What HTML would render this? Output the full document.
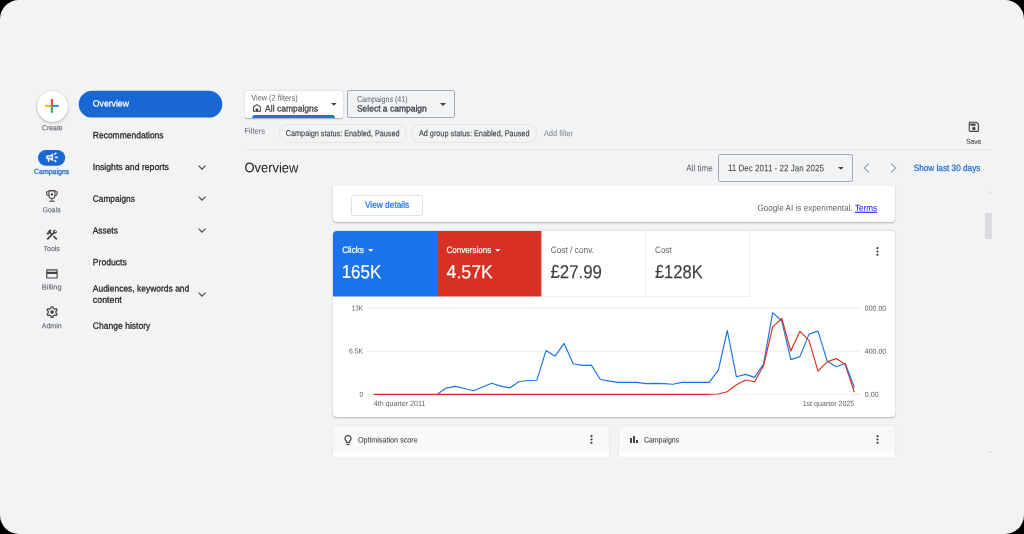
<!DOCTYPE html>
<html>
<head>
<meta charset="utf-8">
<title>Google Ads Overview</title>
<style>
html,body{margin:0;padding:0;}
html{background:#000;}
body{width:1024px;height:534px;overflow:hidden;position:relative;background:#f1f3f4;border-radius:19px;font-family:"Liberation Sans",sans-serif;color:#202124;}
.a{position:absolute;}
.t{position:absolute;white-space:nowrap;}
.ic{position:absolute;overflow:visible;}
.card{position:absolute;background:#fff;box-shadow:0 0.6px 2px rgba(60,64,67,.24),0 0.4px 1px rgba(60,64,67,.13);}
</style>
</head>
<body>
<svg class="ic" style="left:0;top:0" width="1024" height="534"><rect x="78.7" y="90.7" width="143.6" height="26.9" rx="13.45" fill="#1967d2"/><rect x="38" y="149.9" width="27.2" height="15.9" rx="7.95" fill="#1967d2"/></svg>
<!-- left rail -->
<div class="a" style="left:37px;top:90.5px;width:31px;height:31px;border-radius:50%;background:#fff;box-shadow:0 1px 2.5px rgba(60,64,67,.35),0 0 1px rgba(60,64,67,.25);"></div>
<svg class="ic" style="left:45.2px;top:99.2px" width="13.8" height="13.8" viewBox="0 0 14 14"><rect x="5.95" y="0" width="2.1" height="7" fill="#ea4335"/><rect x="5.95" y="7" width="2.1" height="7" fill="#34a853"/><rect x="0" y="5.95" width="7" height="2.1" fill="#fbbc04"/><rect x="7" y="5.95" width="7" height="2.1" fill="#4285f4"/><path d="M5.95 5.95h2.1L5.95 8.05z" fill="#ea4335"/></svg>
<svg class="ic" style="left:44.7px;top:149.85px" width="14.6" height="14.6" viewBox="0 0 24 24"><g fill="#fff" stroke="#fff" stroke-width="0.55" stroke-linejoin="round"><path transform="translate(-1.3 0)" d="M18 11v2h4v-2h-4z M16 17.61c.96.71 2.21 1.65 3.2 2.39.4-.53.8-1.07 1.2-1.6-.99-.74-2.24-1.68-3.2-2.4-.4.54-.8 1.08-1.2 1.61z M20.4 5.6c-.4-.53-.8-1.07-1.2-1.6-.99.74-2.24 1.68-3.2 2.4.4.53.8 1.07 1.2 1.6.96-.72 2.21-1.65 3.2-2.4z"/><path d="M4 9c-1.1 0-2 .9-2 2v2c0 1.1.9 2 2 2h1v4h2v-4h1l5 3V6L8 9H4z M9.03 10.71L11 9.53v4.94l-1.97-1.18-.48-.29H4v-2h4.55l.48-.29z"/></g></svg>
<svg class="ic" style="left:44px;top:188px" width="16" height="16" viewBox="44 188 16 16"><g fill="none" stroke="#444746" stroke-width="1.05" stroke-linejoin="round"><path d="M48.9 190.7H54.9V195.1a3 3.4 0 0 1-6 0Z"/><path d="M48.9 191.8H46.55V193Q46.55 195.5 49.2 196"/><path d="M54.9 191.8H57.25V193Q57.25 195.5 54.6 196"/><path d="M51.9 198.5V201"/><path d="M49.1 201.3H54.7" stroke-width="1.1"/></g><path d="M48.6 190.65H55.2" stroke="#444746" stroke-width="1.2"/><circle cx="51.9" cy="194.4" r="1.2" fill="#444746"/></svg>
<svg class="ic" style="left:44.9px;top:228.0px" width="13.6" height="13.6" viewBox="0 0 24 24"><path fill="#444746" d="M13.783 15.172l2.121-2.121 5.996 5.996-2.121 2.121zM17.5 10c1.93 0 3.5-1.57 3.5-3.5 0-.58-.16-1.12-.41-1.6l-2.7 2.7-1.49-1.49 2.7-2.7c-.48-.25-1.02-.41-1.6-.41C15.57 3 14 4.57 14 6.5c0 .41.08.8.21 1.16l-1.85 1.85-1.78-1.78.71-.71-1.41-1.41L12 3.49c-1.17-1.17-3.07-1.17-4.24 0L4.22 7.03l1.41 1.41H2.81l-.71.71 3.54 3.54.71-.71V9.15l1.41 1.41.71-.71 1.78 1.78-7.41 7.41 2.12 2.12L16.34 9.79c.36.13.75.21 1.16.21z"/></svg>
<svg class="ic" style="left:44.85px;top:266.7px" width="13.9" height="13.9" viewBox="0 0 24 24"><path fill="#444746" d="M20 4H4c-1.11 0-1.99.89-1.99 2L2 18c0 1.11.89 2 2 2h16c1.11 0 2-.89 2-2V6c0-1.11-.89-2-2-2zm0 14H4v-6h16v6zm0-10H4V6h16v2z"/></svg>
<svg class="ic" style="left:44.7px;top:304.9px" width="14.2" height="14.2" viewBox="0 0 24 24"><path fill="#444746" d="M19.43 12.98c.04-.32.07-.64.07-.98 0-.34-.03-.66-.07-.98l2.11-1.65c.19-.15.24-.42.12-.64l-2-3.46c-.09-.16-.26-.25-.44-.25-.06 0-.12.01-.17.03l-2.49 1c-.52-.4-1.08-.73-1.69-.98l-.38-2.650C14.46 2.18 14.25 2 14 2h-4c-.25 0-.46.18-.49.42l-.38 2.650c-.61.25-1.17.59-1.69.98l-2.49-1c-.06-.02-.12-.03-.18-.03-.17 0-.34.09-.43.25l-2 3.46c-.13.22-.07.49.12.64l2.11 1.650c-.04.32-.07.65-.07.98 0 .33.03.66.07.98l-2.11 1.650c-.19.15-.24.42-.12.64l2 3.46c.09.16.26.25.44.25.06 0 .12-.01.17-.03l2.49-1c.52.4 1.08.73 1.69.98l.38 2.650c.03.24.24.42.49.42h4c.25 0 .46-.18.49-.42l.38-2.650c.61-.25 1.17-.59 1.69-.98l2.49 1c.06.02.12.03.18.03.17 0 .34-.09.43-.25l2-3.46c.12-.22.07-.49-.12-.64l-2.11-1.650zm-1.980-1.710c.04.31.05.52.05.73 0 .21-.02.43-.05.73l-.14 1.130.89.700 1.080.840-.700 1.210-1.270-.510-1.040-.420-.900.680c-.43.32-.84.56-1.250.73l-1.060.430-.160 1.130-.200 1.350h-1.400l-.190-1.350-.160-1.130-1.060-.430c-.43-.18-.83-.41-1.230-.71l-.910-.700-1.060.430-1.270.510-.700-1.210 1.080-.840.890-.700-.140-1.130c-.03-.31-.05-.54-.05-.74s.02-.43.05-.73l.14-1.130-.89-.700-1.080-.840.700-1.210 1.270.51 1.040.42.900-.68c.43-.32.84-.56 1.250-.73l1.060-.43.160-1.130.200-1.350h1.390l.190 1.350.160 1.130 1.060.43c.43.18.83.41 1.230.71l.910.700 1.060-.43 1.270-.51.700 1.210-1.070.85-.89.700.14 1.130z"/><circle cx="12" cy="12" r="3.1" fill="#444746"/></svg>
<!-- second nav -->
<svg class="ic" style="left:198px;top:164.6px" width="8" height="5.2" viewBox="0 0 8 5.2"><path d="M0.6 0.7L4 4.2 7.4 0.7" fill="none" stroke="#3c4043" stroke-width="1.05"/></svg>
<svg class="ic" style="left:198px;top:196.20000000000002px" width="8" height="5.2" viewBox="0 0 8 5.2"><path d="M0.6 0.7L4 4.2 7.4 0.7" fill="none" stroke="#3c4043" stroke-width="1.05"/></svg>
<svg class="ic" style="left:198px;top:227.8px" width="8" height="5.2" viewBox="0 0 8 5.2"><path d="M0.6 0.7L4 4.2 7.4 0.7" fill="none" stroke="#3c4043" stroke-width="1.05"/></svg>
<svg class="ic" style="left:198px;top:291.59999999999997px" width="8" height="5.2" viewBox="0 0 8 5.2"><path d="M0.6 0.7L4 4.2 7.4 0.7" fill="none" stroke="#3c4043" stroke-width="1.05"/></svg>
<!-- selectors -->
<div class="a" style="left:244.5px;top:90.5px;width:98.5px;height:27.5px;background:#fff;border-radius:2.5px;box-shadow:0 0.5px 1.5px rgba(60,64,67,.4);overflow:hidden;"><div class="a" style="left:7.5px;top:24.6px;width:83px;height:4px;border-radius:3px 3px 0 0;background:#1a73e8;"></div></div>
<svg class="ic" style="left:253.0px;top:103.9px" width="7.9" height="7.9" viewBox="0 0 8 8"><path d="M0.55 7.45V3L4 0.65 7.45 3V7.45z" fill="none" stroke="#444746" stroke-width="1.05" stroke-linejoin="round"/><rect x="2.75" y="4.55" width="2.5" height="2.95" fill="#444746"/></svg>
<svg class="ic" style="left:331.3px;top:102.8px" width="5.6" height="2.8" viewBox="0 0 10 5" preserveAspectRatio="none"><path d="M0 0h10L5 5z" fill="#3c4043"/></svg>
<div class="a" style="left:347.2px;top:90px;width:107.5px;height:27.9px;box-sizing:border-box;border:1px solid #a3a8ae;border-radius:2.5px;"></div>
<svg class="ic" style="left:440px;top:102.8px" width="6" height="2.9" viewBox="0 0 10 5" preserveAspectRatio="none"><path d="M0 0h10L5 5z" fill="#3c4043"/></svg>
<!-- filters -->
<div class="a" style="left:278.6px;top:124.3px;width:128px;height:18.4px;box-sizing:border-box;border:1px solid #e2e4e7;border-radius:9.2px;"></div>
<div class="a" style="left:411.2px;top:124.3px;width:125.5px;height:18.4px;box-sizing:border-box;border:1px solid #e2e4e7;border-radius:9.2px;"></div>
<svg class="ic" style="left:967.1px;top:120.4px" width="13.7" height="13.7" viewBox="0 0 24 24"><path fill="#444746" d="M17 3H5c-1.11 0-2 .9-2 2v14c0 1.1.89 2 2 2h14c1.1 0 2-.9 2-2V7l-4-4zm2 16H5V5h11.170L19 7.830V19zm-7-7c-1.660 0-3 1.340-3 3s1.340 3 3 3 3-1.340 3-3-1.340-3-3-3zM6 6h9v4H6z"/></svg>
<div class="a" style="left:244.5px;top:149px;width:747.5px;height:1px;background:#e3e5e8;"></div>
<!-- title row -->
<div class="a" style="left:718.1px;top:154.2px;width:134.6px;height:27.4px;box-sizing:border-box;border:1px solid #a3a8ae;border-radius:2.5px;"></div>
<svg class="ic" style="left:837.5px;top:166.9px" width="5.6" height="2.8" viewBox="0 0 10 5" preserveAspectRatio="none"><path d="M0 0h10L5 5z" fill="#3c4043"/></svg>
<svg class="ic" style="left:862.5px;top:163px" width="7" height="10" viewBox="0 0 7 10"><path d="M5.9 0.6L1.1 5l4.8 4.4" fill="none" stroke="#9aa0a6" stroke-width="1.1"/></svg>
<svg class="ic" style="left:889.7px;top:163px" width="7" height="10" viewBox="0 0 7 10"><path d="M1.1 0.6L5.9 5l-4.8 4.4" fill="none" stroke="#9aa0a6" stroke-width="1.1"/></svg>
<div class="a" style="left:985px;top:213px;width:7px;height:26px;background:#dadce0;"></div>
<svg class="ic" style="left:987.6px;top:191.4px" width="4.4" height="2.8" viewBox="0 0 10 5" preserveAspectRatio="none"><path d="M0 5L5 0l5 5z" fill="#dadce0"/></svg>
<svg class="ic" style="left:987.6px;top:451px" width="4.4" height="2.8" viewBox="0 0 10 5" preserveAspectRatio="none"><path d="M0 0h10L5 5z" fill="#dadce0"/></svg>
<!-- card 1 -->
<div class="card" style="left:333px;top:186px;width:562.3px;height:35.7px;border-radius:0 0 4px 4px;box-shadow:0 0.6px 2px rgba(60,64,67,.24),0 0.4px 1px rgba(60,64,67,.13);clip-path:inset(0 -3px -4px -3px);"></div>
<div class="a" style="left:351.2px;top:195.2px;width:71.4px;height:20.6px;box-sizing:border-box;border:1px solid #dfe1e5;border-radius:2.5px;"></div>
<!-- card 2 -->
<div class="card" style="left:333px;top:230.9px;width:562.3px;height:185.8px;border-radius:4px;overflow:hidden;">
  <svg class="ic" style="left:0;top:0" width="320" height="70"><rect x="-1" y="-1" width="105.05" height="66.5" fill="#1a73e8"/><rect x="104.05" y="-1" width="104.35" height="66.5" fill="#d93025"/></svg>
  <div class="a" style="left:208.4px;top:0;width:104.2px;height:66px;box-sizing:border-box;border-right:1px solid #eceef0;border-bottom:1px solid #eceef0;"></div>
  <div class="a" style="left:312.4px;top:0;width:104.2px;height:66px;box-sizing:border-box;border-right:1px solid #eceef0;border-bottom:1px solid #eceef0;"></div>
</div>
<svg class="ic" style="left:368.3px;top:248.9px" width="5.5" height="2.8" viewBox="0 0 10 5" preserveAspectRatio="none"><path d="M0 0h10L5 5z" fill="#fff"/></svg>
<svg class="ic" style="left:495.4px;top:248.9px" width="5.5" height="2.8" viewBox="0 0 10 5" preserveAspectRatio="none"><path d="M0 0h10L5 5z" fill="#fff"/></svg>
<svg class="ic" style="left:876px;top:247.2px" width="3" height="9" viewBox="0 0 3 9"><circle cx="1.5" cy="1.2" r="1.1" fill="#3c4043"/><circle cx="1.5" cy="4.5" r="1.1" fill="#3c4043"/><circle cx="1.5" cy="7.8" r="1.1" fill="#3c4043"/></svg>
<svg class="ic" style="left:0;top:0" width="1024" height="534" viewBox="0 0 1024 534">
  <g stroke="#e5e7ea" stroke-width="0.85">
    <line x1="367" y1="308" x2="860.5" y2="308"/>
    <line x1="367" y1="351.1" x2="860.5" y2="351.1"/>
    <line x1="367" y1="394.3" x2="860.5" y2="394.3"/>
    <line x1="373.7" y1="394.3" x2="373.7" y2="397.4"/>
    <line x1="854.3" y1="394.3" x2="854.3" y2="397.4"/>
  </g>
  <polyline fill="none" stroke="#1a73e8" stroke-width="1.15" stroke-linejoin="round" points="437.2,394.2 446.2,388.1 455.3,386.4 464.4,388.5 473.4,390.7 482.5,387.0 491.6,383.3 500.7,386.1 509.7,387.9 518.8,381.8 527.9,380.5 536.9,380.2 546.0,350.6 555.1,356.2 564.1,343.4 573.2,363.8 582.3,365.4 591.3,365.1 600.4,379.5 609.5,381.1 618.5,382.4 627.6,382.4 636.7,382.4 645.7,383.6 654.8,383.4 663.9,383.6 672.9,384.3 682.0,382.4 691.1,382.4 700.1,382.4 709.2,382.4 718.3,370.3 727.3,330.5 736.4,376.8 745.5,374.4 754.6,377.4 763.6,363.7 772.7,312.7 781.8,321.0 790.8,359.6 799.9,356.6 809.0,334.1 818.0,331.1 827.1,360.9 836.2,366.7 845.2,363.3 854.3,387.7"/>
  <polyline fill="none" stroke="#d93025" stroke-width="1.15" stroke-linejoin="round" points="373.7,394.3 382.8,394.3 391.8,394.3 400.9,394.3 410.0,394.3 419.0,394.3 428.1,394.3 437.2,394.3 446.2,394.3 455.3,394.3 464.4,394.3 473.4,394.3 482.5,394.3 491.6,394.3 500.7,394.3 509.7,394.3 518.8,394.3 527.9,394.3 536.9,394.3 546.0,394.3 555.1,394.3 564.1,394.3 573.2,394.3 582.3,394.3 591.3,394.3 600.4,394.3 609.5,394.3 618.5,394.3 627.6,394.3 636.7,394.3 645.7,394.3 654.8,394.3 663.9,394.3 672.9,394.3 682.0,394.3 691.1,394.3 700.1,394.3 709.2,394.3 718.3,394.0 727.3,391.8 736.4,384.7 745.5,380.0 754.6,381.8 763.6,365.6 772.7,326.8 781.8,318.5 790.8,351.0 799.9,331.3 809.0,340.3 818.0,371.2 827.1,361.8 836.2,358.6 845.2,364.6 854.3,392.2"/>
</svg>
<!-- cards 3/4 -->
<div class="card" style="left:333px;top:426.2px;width:276.2px;height:30.6px;box-shadow:0 0 1.5px rgba(60,64,67,.18);border-radius:4px 4px 0 0;background:linear-gradient(#f8f9fa 0,#f8f9fa 26.5px,#fff 27.5px);clip-path:inset(-3px -3px 0 -3px);"></div>
<div class="card" style="left:619.1px;top:426.2px;width:276.2px;height:30.6px;box-shadow:0 0 1.5px rgba(60,64,67,.18);border-radius:4px 4px 0 0;background:linear-gradient(#f8f9fa 0,#f8f9fa 26.5px,#fff 27.5px);clip-path:inset(-3px -3px 0 -3px);"></div>
<svg class="ic" style="left:341.75px;top:433.75px" width="12" height="12" viewBox="0 0 24 24"><path fill="#444746" stroke="#444746" stroke-width="0.5" d="M9 21c0 .55.45 1 1 1h4c.55 0 1-.45 1-1v-1H9v1zm3-19C8.140 2 5 5.140 5 9c0 2.380 1.190 4.470 3 5.740V17c0 .55.45 1 1 1h6c.55 0 1-.45 1-1v-2.260c1.810-1.270 3-3.360 3-5.740 0-3.860-3.140-7-7-7zm2.850 11.100l-.85.600V16h-4v-2.300l-.85-.600C7.800 12.160 7 10.630 7 9c0-2.760 2.240-5 5-5s5 2.240 5 5c0 1.630-.8 3.160-2.150 4.100z"/></svg>
<div class="a" style="left:629.7px;top:438px;width:1.9px;height:5.1px;background:#444746;"></div>
<div class="a" style="left:632.7px;top:436px;width:2px;height:7.1px;background:#444746;"></div>
<div class="a" style="left:635.9px;top:439.9px;width:2px;height:3.2px;background:#444746;"></div>
<svg class="ic" style="left:590.3px;top:435px" width="3" height="9" viewBox="0 0 3 9"><circle cx="1.5" cy="1.2" r="1.1" fill="#3c4043"/><circle cx="1.5" cy="4.5" r="1.1" fill="#3c4043"/><circle cx="1.5" cy="7.8" r="1.1" fill="#3c4043"/></svg>
<svg class="ic" style="left:876px;top:435px" width="3" height="9" viewBox="0 0 3 9"><circle cx="1.5" cy="1.2" r="1.1" fill="#3c4043"/><circle cx="1.5" cy="4.5" r="1.1" fill="#3c4043"/><circle cx="1.5" cy="7.8" r="1.1" fill="#3c4043"/></svg>
<!-- all text -->
<svg class="ic" style="left:0;top:0;font-family:'Liberation Sans',sans-serif;will-change:transform;" width="1024" height="534" viewBox="0 0 1024 534">
<text transform="matrix(0.954 0.001 0 1.000 41.90 130.27)" font-size="7.27" fill="#5f6368" stroke="#5f6368" stroke-width="0.1" stroke-linejoin="round">Create</text>
<text transform="matrix(0.966 0.001 0 1.000 33.95 173.87)" font-size="7.27" fill="#1967d2" stroke="#1967d2" stroke-width="0.25" stroke-linejoin="round">Campaigns</text>
<text transform="matrix(0.938 0.001 0 1.000 42.80 212.32)" font-size="7.27" fill="#5f6368" stroke="#5f6368" stroke-width="0.1" stroke-linejoin="round">Goals</text>
<text transform="matrix(0.961 0.001 0 1.000 43.55 251.02)" font-size="7.27" fill="#5f6368" stroke="#5f6368" stroke-width="0.1" stroke-linejoin="round">Tools</text>
<text transform="matrix(1.021 0.001 0 1.000 41.80 289.52)" font-size="7.27" fill="#5f6368" stroke="#5f6368" stroke-width="0.1" stroke-linejoin="round">Billing</text>
<text transform="matrix(0.976 0.001 0 1.000 41.65 328.22)" font-size="7.27" fill="#5f6368" stroke="#5f6368" stroke-width="0.1" stroke-linejoin="round">Admin</text>
<text transform="matrix(0.949 0.001 0 1.000 92.80 106.47)" font-size="9.16" fill="#fff" stroke="#fff" stroke-width="0.26" stroke-linejoin="round">Overview</text>
<text transform="matrix(0.927 0.001 0 1.000 92.80 138.22)" font-size="9.16" fill="#202124" stroke="#202124" stroke-width="0.26" stroke-linejoin="round">Recommendations</text>
<text transform="matrix(0.947 0.001 0 1.000 92.80 170.02)" font-size="9.16" fill="#202124" stroke="#202124" stroke-width="0.26" stroke-linejoin="round">Insights and reports</text>
<text transform="matrix(0.907 0.001 0 1.000 92.80 201.77)" font-size="9.16" fill="#202124" stroke="#202124" stroke-width="0.26" stroke-linejoin="round">Campaigns</text>
<text transform="matrix(0.910 0.001 0 1.000 92.80 233.52)" font-size="9.16" fill="#202124" stroke="#202124" stroke-width="0.26" stroke-linejoin="round">Assets</text>
<text transform="matrix(0.941 0.001 0 1.000 92.80 265.22)" font-size="9.16" fill="#202124" stroke="#202124" stroke-width="0.26" stroke-linejoin="round">Products</text>
<text transform="matrix(0.926 0.001 0 1.000 92.80 291.47)" font-size="9.16" fill="#202124" stroke="#202124" stroke-width="0.26" stroke-linejoin="round">Audiences, keywords and</text>
<text transform="matrix(0.965 0.001 0 1.000 92.80 302.67)" font-size="9.16" fill="#202124" stroke="#202124" stroke-width="0.26" stroke-linejoin="round">content</text>
<text transform="matrix(0.934 0.001 0 1.000 92.80 328.67)" font-size="9.16" fill="#202124" stroke="#202124" stroke-width="0.26" stroke-linejoin="round">Change history</text>
<text transform="matrix(0.895 0.001 0 1.000 251.30 100.59)" font-size="8.21" fill="#5f6368">View (2 filters)</text>
<text transform="matrix(0.945 0.001 0 1.000 265.10 111.42)" font-size="9.01" fill="#3c4043" stroke="#3c4043" stroke-width="0.28" stroke-linejoin="round">All campaigns</text>
<text transform="matrix(0.864 0.001 0 1.000 356.90 101.87)" font-size="8.28" fill="#5f6368">Campaigns (41)</text>
<text transform="matrix(0.943 0.001 0 1.000 356.90 111.42)" font-size="9.01" fill="#3c4043" stroke="#3c4043" stroke-width="0.3" stroke-linejoin="round">Select a campaign</text>
<text transform="matrix(0.921 0.001 0 1.000 244.50 133.62)" font-size="8.14" fill="#5f6368">Filters</text>
<text transform="matrix(0.852 0.001 0 1.000 285.80 136.10)" font-size="8.52" fill="#3c4043" stroke="#3c4043" stroke-width="0.12" stroke-linejoin="round">Campaign status: Enabled, Paused</text>
<text transform="matrix(0.856 0.001 0 1.000 418.90 136.10)" font-size="8.52" fill="#3c4043" stroke="#3c4043" stroke-width="0.12" stroke-linejoin="round">Ad group status: Enabled, Paused</text>
<text transform="matrix(0.872 0.001 0 1.000 543.90 136.10)" font-size="8.52" fill="#80868b">Add filter</text>
<text transform="matrix(0.930 0.001 0 1.000 966.20 143.87)" font-size="7.12" fill="#3c4043" stroke="#3c4043" stroke-width="0.1" stroke-linejoin="round">Save</text>
<text transform="matrix(0.933 0.001 0 1.000 244.50 172.34)" font-size="13.88" fill="#202124">Overview</text>
<text transform="matrix(0.872 0.001 0 1.000 686.30 171.12)" font-size="9.30" fill="#5f6368">All time</text>
<text transform="matrix(0.868 0.001 0 1.000 727.90 171.12)" font-size="9.30" fill="#3c4043">11 Dec 2011 - 22 Jan 2025</text>
<text transform="matrix(0.899 0.001 0 1.000 913.70 171.02)" font-size="9.16" fill="#1967d2" stroke="#1967d2" stroke-width="0.22" stroke-linejoin="round">Show last 30 days</text>
<text transform="matrix(0.910 0.001 0 1.000 364.90 207.77)" font-size="9.16" fill="#1a73e8" stroke="#1a73e8" stroke-width="0.25" stroke-linejoin="round">View details</text>
<text transform="matrix(0.937 0.001 0 1.000 757.40 210.67)" font-size="8.72" fill="#5f6368">Google AI is experimental. <tspan fill="#0a0aee" text-decoration="underline">Terms</tspan></text>
<text transform="matrix(0.875 0.001 0 1.000 342.20 253.02)" font-size="9.30" fill="#fff" stroke="#fff" stroke-width="0.2" stroke-linejoin="round">Clicks</text>
<text transform="matrix(0.904 0.001 0 1.000 341.70 278.12)" font-size="18.75" fill="#fff" stroke="#fff" stroke-width="0.2" stroke-linejoin="round">165K</text>
<text transform="matrix(0.865 0.001 0 1.000 446.50 253.02)" font-size="9.30" fill="#fff" stroke="#fff" stroke-width="0.2" stroke-linejoin="round">Conversions</text>
<text transform="matrix(0.943 0.001 0 1.000 446.60 278.12)" font-size="18.75" fill="#fff" stroke="#fff" stroke-width="0.2" stroke-linejoin="round">4.57K</text>
<text transform="matrix(0.896 0.001 0 1.000 550.70 252.92)" font-size="9.30" fill="#5f6368">Cost / conv.</text>
<text transform="matrix(0.898 0.001 0 1.000 550.50 278.12)" font-size="18.75" fill="#3c4043" stroke="#3c4043" stroke-width="0.15" stroke-linejoin="round">£27.99</text>
<text transform="matrix(0.863 0.001 0 1.000 655.10 252.92)" font-size="9.30" fill="#5f6368">Cost</text>
<text transform="matrix(0.885 0.001 0 1.000 654.90 278.12)" font-size="18.75" fill="#3c4043" stroke="#3c4043" stroke-width="0.15" stroke-linejoin="round">£128K</text>
<text transform="matrix(0.882 0.001 0 1.000 363.10 310.52)" font-size="7.27" fill="#5f6368" text-anchor="end">13K</text>
<text transform="matrix(0.943 0.001 0 1.000 363.10 353.62)" font-size="7.27" fill="#5f6368" text-anchor="end">6.5K</text>
<text transform="matrix(0.866 0.001 0 1.000 363.10 396.82)" font-size="7.27" fill="#5f6368" text-anchor="end">0</text>
<text transform="matrix(0.967 0.001 0 1.000 864.80 310.62)" font-size="7.27" fill="#5f6368">800.00</text>
<text transform="matrix(0.967 0.001 0 1.000 864.80 353.62)" font-size="7.27" fill="#5f6368">400.00</text>
<text transform="matrix(0.976 0.001 0 1.000 864.80 396.72)" font-size="7.27" fill="#5f6368">0.00</text>
<text transform="matrix(0.942 0.001 0 1.000 373.70 405.97)" font-size="7.56" fill="#5f6368">4th quarter 2011</text>
<text transform="matrix(0.939 0.001 0 1.000 854.30 405.97)" font-size="7.56" fill="#5f6368" text-anchor="end">1st quarter 2025</text>
<text transform="matrix(0.905 0.001 0 1.000 358.00 442.42)" font-size="7.99" fill="#3c4043" stroke="#3c4043" stroke-width="0.08" stroke-linejoin="round">Optimisation score</text>
<text transform="matrix(0.873 0.001 0 1.000 643.90 442.42)" font-size="7.99" fill="#3c4043" stroke="#3c4043" stroke-width="0.08" stroke-linejoin="round">Campaigns</text>
</svg>
</body>
</html>
